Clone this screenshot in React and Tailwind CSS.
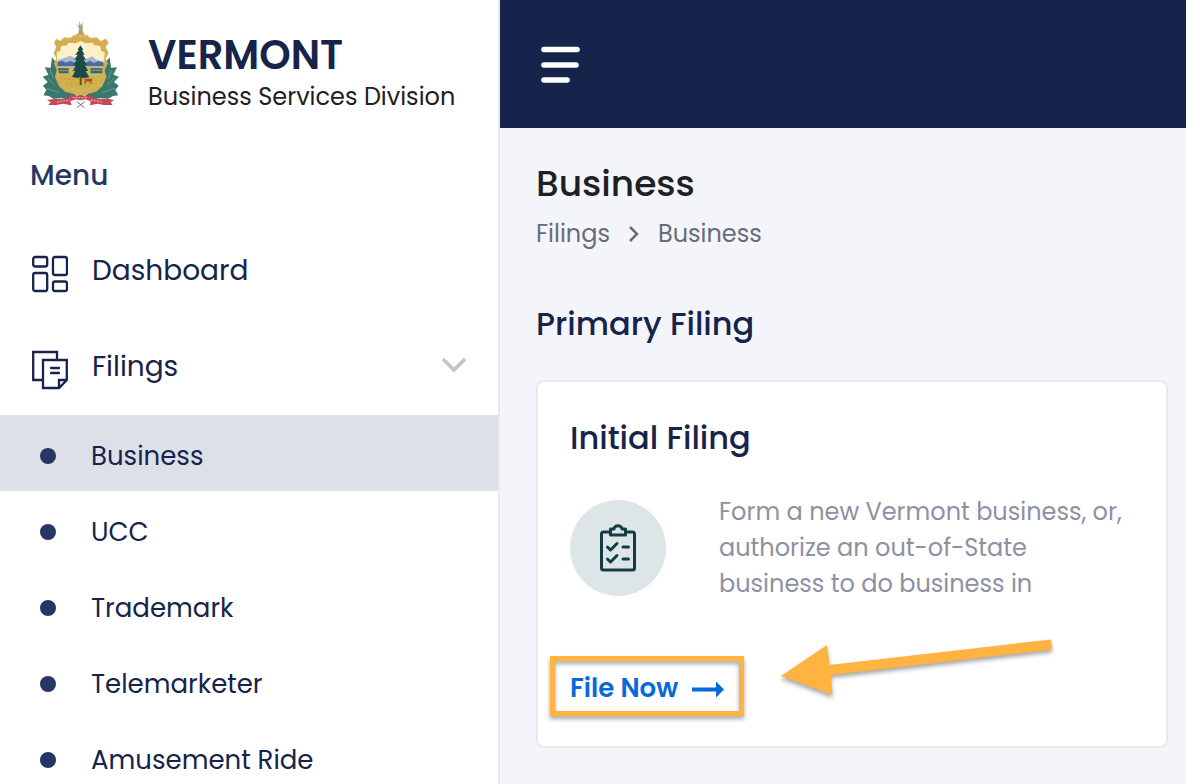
import clsx from 'clsx'

const filings = ['Business', 'UCC', 'Trademark', 'Telemarketer', 'Amusement Ride']

function Seal() {
  return (
    <svg viewBox="0 0 300 330" className="h-[110px] w-[100px] shrink-0" role="img" aria-label="Vermont coat of arms">
      {/* laurel branches */}
      <g fill="#3a786b">
        <path d="M66 142L80 160L88 180L92 205L112 235L140 258L132 271L98 265L70 266L56 258L40 256L49 240L39 227L53 216L38 200L55 194L44 172L62 173Z" />
        <path d="M239 142L225 160L217 180L213 205L193 235L165 258L173 271L207 265L235 266L249 258L265 256L256 240L266 227L252 216L267 200L250 194L261 172L243 173Z" />
      </g>
      <g fill="none" stroke="#7fa79b" strokeWidth="2">
        <path d="M60 180L70 205M53 205L74 225M50 235L88 248M84 215L105 245" />
        <path d="M245 180L235 205M252 205L231 225M255 235L217 248M221 215L200 245" />
      </g>
      {/* gold frame */}
      <path
        fill="#d5ae50"
        d="M79 86L91 93L103 82L121 84L132 75L151 80L171 75L181 84L200 82L212 93L228 86L236 98L227 111L236 130L227 145L234 160L224 180L229 202L217 229L196 246L171 252L152 264L132 252L107 246L87 229L75 202L80 180L72 160L79 145L71 130L79 111L72 98Z"
      />
      <path fill="#fdf0c8" d="M80 126L91 123L93 108L111 106L116 98L138 100L151 92L166 100L188 98L193 106L211 108L213 123L224 126L222 166H82Z" />
      <path fill="#a9b7cc" d="M83 150L104 144L120 137L137 145L151 151L167 147L187 139L200 150L221 154V170H83Z" />
      <path fill="#4969a9" d="M82 156L96 152L109 158L120 153L138 159L166 158L179 152L193 159L204 153L221 158V169H82Z" />
      <path fill="#c8b96d" d="M84 169H220L218 202L205 225L178 238L152 246L125 238L97 225L82 201Z" />
      <path fill="#3f6268" d="M84 175H116V190H87ZM181 175H217V190H182Z" />
      <path stroke="#8aa283" strokeWidth="3" d="M88 182H116M182 181H215" />
      <path fill="#cfb04a" d="M84 191L117 193L133 203L171 202L219 192L210 218L185 232L151 240L113 231L92 218Z" />
      <path stroke="#a6943b" strokeWidth="2" strokeDasharray="5 8" fill="none" d="M102 208H159M109 219H190M122 228H180" />
      {/* pine */}
      <path fill="#684d2f" d="M149 197H155V225H149Z" />
      <path
        fill="#1b4b49"
        d="M151 106L143 119L146 121L136 134L143 134L133 149L140 149L130 166L138 165L128 184L136 182L126 201L144 204L151 200L160 205L178 202L167 183L175 183L164 165L171 165L161 149L168 149L158 134L164 134L156 121L160 119Z"
      />
      <path fill="#b64b2e" d="M162 208L168 206L182 207L186 204L187 212L184 215V222H181V215L169 214L167 221H164V212Z" />
      {/* stag crest */}
      <path fill="#d5ae50" d="M137 71L166 71L162 79H140Z" />
      <path fill="#b0a078" d="M145 72L147 56L142 46L146 48L148 36L152 46L158 38L157 50L161 49L157 58L161 72Z" />
      <path fill="none" stroke="#b9bfc0" strokeWidth="2" d="M140 43L145 49M148 34L150 48M159 36L154 50" />
      {/* ribbon */}
      <path fill="#c54858" d="M51 270L75 266L91 268L119 262L121 254L139 259L151 255L165 259L181 254L184 262L211 268L232 266L252 270L242 277L248 285L221 285L203 281L180 286L182 274L168 268L151 271L135 268L121 274L125 286L99 281L79 285L55 285L62 277Z" />
      <path fill="none" stroke="#f1c8c7" strokeWidth="3" strokeDasharray="5 4" d="M82 276L120 270M128 262L151 264L174 262M183 270L219 277" />
      <path fill="none" stroke="#69737c" strokeWidth="3" d="M141 275L163 293M164 275L141 293" />
    </svg>
  )
}

function DashboardIcon() {
  return (
    <svg viewBox="0 0 36 40" className="mt-1.5 h-10 w-9" fill="none" stroke="currentColor" strokeWidth="2.300" aria-hidden="true">
      <rect x="1.200" y="3" width="14" height="9.500" rx="2" />
      <rect x="21" y="3" width="14" height="18" rx="2" />
      <rect x="1.200" y="19" width="14" height="18" rx="2" />
      <rect x="21" y="27.500" width="14" height="9.500" rx="2" />
    </svg>
  )
}

function FilingsIcon() {
  return (
    <svg viewBox="0 0 36 40" className="mt-1.5 h-10 w-9" fill="none" stroke="currentColor" strokeWidth="2.300" aria-hidden="true">
      <path d="M11 30H1.200V2H25V10" />
      <path d="M11 10H34.800V30L27 38H11ZM27 38V30H34.800" />
      <path d="M19 18H27M19 23H27" strokeLinecap="round" />
    </svg>
  )
}

function ChecklistIcon() {
  return (
    <svg viewBox="0 0 36 48" className="h-12 w-9" fill="none" stroke="currentColor" strokeWidth="3" strokeLinejoin="round" strokeLinecap="round" aria-hidden="true">
      <path d="M10 8H3.500Q1.500 8 1.500 10V44Q1.500 46 3.500 46H32.500Q34.500 46 34.500 44V10Q34.500 8 32.500 8H26" />
      <path d="M10.500 5H14C14 0.800 22 0.800 22 5H25.500V11H10.500Z" />
      <path d="M7.500 23L10.500 26L17 19.500M7.500 35L10.500 38L17 31.500M23 23H28.500M23 35H28.500" />
    </svg>
  )
}

function Sidebar() {
  return (
    <aside className="w-[500px] shrink-0 border-r-2 border-[#e8e9ed] bg-white text-[#16244b]">
      <div className="flex h-32 items-start gap-[18px] pt-2.5 pl-[30px]">
        <Seal />
        <div className="mt-[21px]">
          <p className="text-[40px] leading-12 font-semibold">VERMONT</p>
          <p className="text-2xl leading-9 text-[#1f2024]">Business Services Division</p>
        </div>
      </div>
      <h2 className="h-[95px] pt-[30px] pl-[30px] text-[28px] leading-9 font-medium text-[#263765]">Menu</h2>
      <nav>
        <a href="#dashboard" className="flex h-24 items-center gap-6 pl-8 text-[28px]">
          <DashboardIcon />
          <span>Dashboard</span>
        </a>
        <button type="button" aria-expanded="true" className="flex h-24 w-full items-center gap-6 pr-8 pl-8 text-[28px]">
          <FilingsIcon />
          <span>Filings</span>
          <svg viewBox="0 0 24 16" className="mb-1 ml-auto h-4 w-6" fill="none" stroke="#c3c5cc" strokeWidth="3.500" aria-hidden="true">
            <path d="M1 2L12 13L23 2" />
          </svg>
        </button>
        <ul>
          {filings.map((name, i) => (
            <li key={name}>
              <a
                href={`#${name}`}
                className={clsx('flex h-[76px] items-center gap-[35px] pt-1.5 pl-10 text-[26px]', i === 0 && 'bg-[#dde0e8]')}
              >
                <span className="size-4 rounded-full bg-[#263765]" />
                {name}
              </a>
            </li>
          ))}
        </ul>
      </nav>
    </aside>
  )
}

function FilingCard() {
  return (
    <section className="relative mt-8 rounded-lg border-2 border-[#e9eaee] bg-white px-8 pb-[38px]">
      <h3 className="pt-8 text-[32px] leading-12 font-medium text-[#16244b]">Initial Filing</h3>
      <div className="mt-8 flex items-start">
        <div className="mt-1.5 flex size-24 shrink-0 items-center justify-center rounded-full bg-[#dde5e6] text-[#123e43]">
          <ChecklistIcon />
        </div>
        <p className="ml-[53px] w-[416px] text-2xl leading-9 text-[#8e90a3]">
          Form a new Vermont business, or, authorize an out-of-State business to do business in
        </p>
      </div>
      <button type="button" className="relative mt-[62px] flex h-11 items-center gap-3 pt-1 text-[26px] font-semibold text-[#0868dc]">
        File Now
        <svg viewBox="0 0 34 18" className="mt-0.5 h-[18px] w-[34px]" fill="currentColor" aria-hidden="true">
          <path d="M2 7.500H26V1.500L34 9.500L26 17.500V11.500H2Z" />
        </svg>
        <span className="absolute -inset-x-5 -inset-y-2 border-5 border-[#ffb340] drop-shadow-[0_3px_2px_rgba(0,0,0,0.35)]" />
      </button>
      <svg viewBox="0 0 280 70" className="absolute top-[254px] left-[238px] h-[70px] w-[280px] drop-shadow-[0_3px_2px_rgba(0,0,0,0.35)]" fill="#ffb340" aria-hidden="true">
        <path d="M5 40L51 9L53.500 29L275 3.500L276 13.500L55 39L56.500 59Z" />
      </svg>
    </section>
  )
}

export default function App() {
  return (
    <div className="flex h-screen overflow-hidden bg-[#f4f5fa] font-['Poppins','Inter',sans-serif]">
      <Sidebar />
      <div className="min-w-0 flex-1">
        <header className="flex h-32 items-center bg-[#16244b] pl-10">
          <button type="button" aria-label="Toggle menu">
            <svg viewBox="0 0 40 40" className="size-10" fill="none" stroke="#fff" strokeWidth="5.600" strokeLinecap="round" aria-hidden="true">
              <path d="M4 5.500H37M4 21H36M4 36H27" />
            </svg>
          </button>
        </header>
        <main className="pt-8 pr-[18px] pl-9">
          <h1 className="text-4xl leading-12 font-medium text-[#1f2024]">Business</h1>
          <nav aria-label="Breadcrumb" className="mt-2 flex items-center gap-4 text-2xl leading-9 text-[#686b7a]">
            <a href="#filings">Filings</a>
            <svg viewBox="0 0 16 16" className="size-4" fill="none" stroke="currentColor" strokeWidth="2.500" aria-hidden="true">
              <path d="M4 1L11 8L4 15" />
            </svg>
            <span>Business</span>
          </nav>
          <h2 className="mt-12 text-[32px] leading-12 font-medium text-[#16244b]">Primary Filing</h2>
          <FilingCard />
        </main>
      </div>
    </div>
  )
}
